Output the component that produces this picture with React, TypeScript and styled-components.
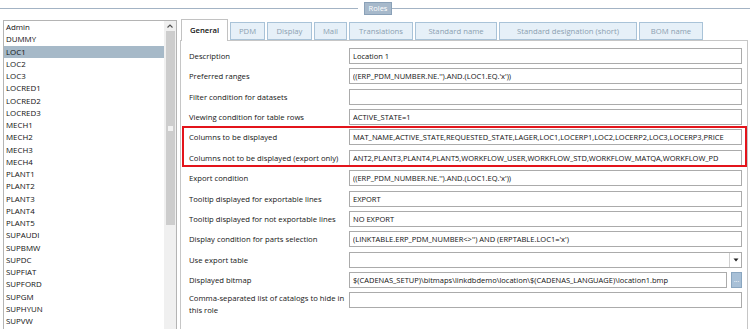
import React from 'react';
import styled, { createGlobalStyle } from 'styled-components';

const GlobalStyle = createGlobalStyle`
  body {
    margin: 0;
    background: #ffffff;
    font-family: "Open Sans", "Noto Sans", sans-serif;
    font-size: 7.7px;
    color: #111111;
  }
`;

const Page = styled.div`
  width: 750px;
  height: 329px;
  overflow: hidden;
  display: flex;
  flex-direction: column;
`;

const Header = styled.div`
  height: 17px;
  display: flex;
  align-items: center;
`;

const HeaderLine = styled.div`
  flex: 1;
  height: 1px;
  background: #a3b3c4;
`;

const HeaderLabel = styled.div`
  height: 11px;
  line-height: 11px;
  padding: 0 4px;
  margin-left: 6px;
  background: #a7b9cb;
  border: 1px solid #8aa1b8;
  color: #ffffff;
  font-size: 7.5px;
`;

const Main = styled.div`
  flex: 1;
  display: flex;
  padding-left: 3px;
  gap: 3px;
  min-height: 0;
`;

const ListBox = styled.div`
  width: 172px;
  margin-top: 3px;
  border: 1px solid #b4b4b4;
  border-bottom: none;
  display: flex;
  overflow: hidden;
`;

const Items = styled.div`
  flex: 1;
`;

const Item = styled.div<{ $selected?: boolean }>`
  height: 12.25px;
  line-height: 12.25px;
  padding-left: 2px;
  font-size: 7.9px;
  white-space: nowrap;
  background: ${(p) => (p.$selected ? '#a6b9c8' : 'transparent')};
`;

const ScrollBar = styled.div`
  width: 12px;
  background: #f0f0f0;
  display: flex;
  flex-direction: column;
  align-items: center;
`;

const ScrollArrow = styled.div`
  height: 10px;
  display: flex;
  align-items: center;
  justify-content: center;
`;

const Thumb = styled.div`
  width: 9px;
  height: 194px;
  background: #cdcdcd;
  display: flex;
  align-items: center;
  justify-content: center;
  &::after {
    content: '';
    width: 5px;
    height: 5px;
    background: #f2f2f2;
  }
`;

const PanelColumn = styled.div`
  flex: 1;
  margin-top: 2px;
  margin-right: 2px;
  display: flex;
  flex-direction: column;
  min-width: 0;
`;

const TabRow = styled.div`
  height: 21px;
  display: flex;
  align-items: flex-end;
  gap: 2px;
  padding-left: 1px;
`;

const Tab = styled.div<{ $w: number; $active?: boolean }>`
  box-sizing: border-box;
  width: ${(p) => p.$w}px;
  height: ${(p) => (p.$active ? 22 : 18)}px;
  margin-bottom: ${(p) => (p.$active ? -1 : 0)}px;
  position: relative;
  z-index: ${(p) => (p.$active ? 1 : 0)};
  display: flex;
  align-items: center;
  justify-content: center;
  white-space: nowrap;
  border: 1px solid ${(p) => (p.$active ? '#c2c2c2' : '#a9c3d8')};
  border-bottom: ${(p) => (p.$active ? 'none' : '1px solid #a9c3d8')};
  background: ${(p) => (p.$active ? '#ffffff' : '#e6f0f8')};
  color: ${(p) => (p.$active ? '#111111' : '#8b9fb0')};
  font-weight: ${(p) => (p.$active ? 600 : 400)};
  padding-bottom: ${(p) => (p.$active ? 2 : 0)}px;
`;

const Panel = styled.div`
  flex: 1;
  border: 1px solid #c6c6c6;
  border-bottom: none;
  padding: 7px 5px 0 8px;
  display: flex;
  flex-direction: column;
  gap: 4.36px;
`;

const Group = styled.div`
  position: relative;
  display: flex;
  flex-direction: column;
  gap: 4.36px;
  &::before {
    content: '';
    position: absolute;
    top: -3px;
    bottom: -1px;
    left: -7px;
    right: -5px;
    border: 2px solid #e3141b;
  }
`;

const Row = styled.div<{ $tall?: boolean }>`
  display: flex;
  align-items: ${(p) => (p.$tall ? 'flex-start' : 'center')};
  min-height: 16px;
`;

const Label = styled.div`
  width: 160px;
  flex-shrink: 0;
  line-height: 12px;
  color: #161616;
`;

const Field = styled.div`
  flex: 1;
  box-sizing: border-box;
  height: 16px;
  line-height: 14px;
  border: 1px solid #ababab;
  padding-left: 3px;
  font-size: 7.5px;
  white-space: nowrap;
  overflow: hidden;
  display: flex;
  min-width: 0;
`;

const FieldText = styled.span`
  flex: 1;
  overflow: hidden;
`;

const DropButton = styled.div`
  width: 11px;
  border-left: 1px solid #d0d0d0;
  display: flex;
  align-items: center;
  justify-content: center;
`;

const BrowseButton = styled.div`
  box-sizing: border-box;
  width: 11px;
  height: 16px;
  margin-left: 4px;
  background: #a8c0d7;
  border: 1px solid #8aa6c0;
  color: #ffffff;
  font-size: 7px;
  line-height: 14px;
  text-align: center;
  overflow: hidden;
`;

const roles = [
  'Admin', 'DUMMY', 'LOC1', 'LOC2', 'LOC3', 'LOCRED1', 'LOCRED2', 'LOCRED3',
  'MECH1', 'MECH2', 'MECH3', 'MECH4', 'PLANT1', 'PLANT2', 'PLANT3', 'PLANT4',
  'PLANT5', 'SUPAUDI', 'SUPBMW', 'SUPDC', 'SUPFIAT', 'SUPFORD', 'SUPGM',
  'SUPHYUN', 'SUPVW',
];

const tabs: [string, number][] = [
  ['General', 47], ['PDM', 35], ['Display', 45], ['Mail', 33],
  ['Translations', 64], ['Standard name', 82],
  ['Standard designation (short)', 138], ['BOM name', 64],
];

const TextRow: React.FC<{ label: string; value?: string }> = ({ label, value }) => (
  <Row>
    <Label>{label}</Label>
    <Field>
      <FieldText>{value}</FieldText>
    </Field>
  </Row>
);

export default function App() {
  return (
    <>
      <GlobalStyle />
      <Page>
        <Header>
          <HeaderLine />
          <HeaderLabel>Roles</HeaderLabel>
          <HeaderLine />
        </Header>
        <Main>
          <ListBox>
            <Items>
              {roles.map((r) => (
                <Item key={r} $selected={r === 'LOC1'}>{r}</Item>
              ))}
            </Items>
            <ScrollBar>
              <ScrollArrow>
                <svg width="6" height="4" viewBox="0 0 6 4">
                  <path d="M0.5 3.5 L3 1 L5.5 3.5" fill="none" stroke="#505050" strokeWidth="1.1" />
                </svg>
              </ScrollArrow>
              <Thumb />
            </ScrollBar>
          </ListBox>
          <PanelColumn>
            <TabRow>
              {tabs.map(([t, w]) => (
                <Tab key={t} $w={w} $active={t === 'General'}>{t}</Tab>
              ))}
            </TabRow>
            <Panel>
              <TextRow label="Description" value="Location 1" />
              <TextRow label="Preferred ranges" value="((ERP_PDM_NUMBER.NE.'').AND.(LOC1.EQ.'x'))" />
              <TextRow label="Filter condition for datasets" />
              <TextRow label="Viewing condition for table rows" value="ACTIVE_STATE=1" />
              <Group>
                <TextRow
                  label="Columns to be displayed"
                  value="MAT_NAME,ACTIVE_STATE,REQUESTED_STATE,LAGER,LOC1,LOCERP1,LOC2,LOCERP2,LOC3,LOCERP3,PRICE"
                />
                <TextRow
                  label="Columns not to be displayed (export only)"
                  value="ANT2,PLANT3,PLANT4,PLANT5,WORKFLOW_USER,WORKFLOW_STD,WORKFLOW_MATQA,WORKFLOW_PD"
                />
              </Group>
              <TextRow label="Export condition" value="((ERP_PDM_NUMBER.NE.'').AND.(LOC1.EQ.'x'))" />
              <TextRow label="Tooltip displayed for exportable lines" value="EXPORT" />
              <TextRow label="Tooltip displayed for not exportable lines" value="NO EXPORT" />
              <TextRow
                label="Display condition for parts selection"
                value="(LINKTABLE.ERP_PDM_NUMBER<>'') AND (ERPTABLE.LOC1='x')"
              />
              <Row>
                <Label>Use export table</Label>
                <Field>
                  <FieldText />
                  <DropButton>
                    <svg width="6" height="4" viewBox="0 0 6 4">
                      <path d="M0.5 0.5 L5.5 0.5 L3 3.5 Z" fill="#222" />
                    </svg>
                  </DropButton>
                </Field>
              </Row>
              <Row>
                <Label>Displayed bitmap</Label>
                <Field>
                  <FieldText>$(CADENAS_SETUP)\bitmaps\linkdbdemo\location\$(CADENAS_LANGUAGE)\location1.bmp</FieldText>
                </Field>
                <BrowseButton>...</BrowseButton>
              </Row>
              <Row $tall>
                <Label>Comma-separated list of catalogs to hide in this role</Label>
                <Field />
              </Row>
            </Panel>
          </PanelColumn>
        </Main>
      </Page>
    </>
  );
}
